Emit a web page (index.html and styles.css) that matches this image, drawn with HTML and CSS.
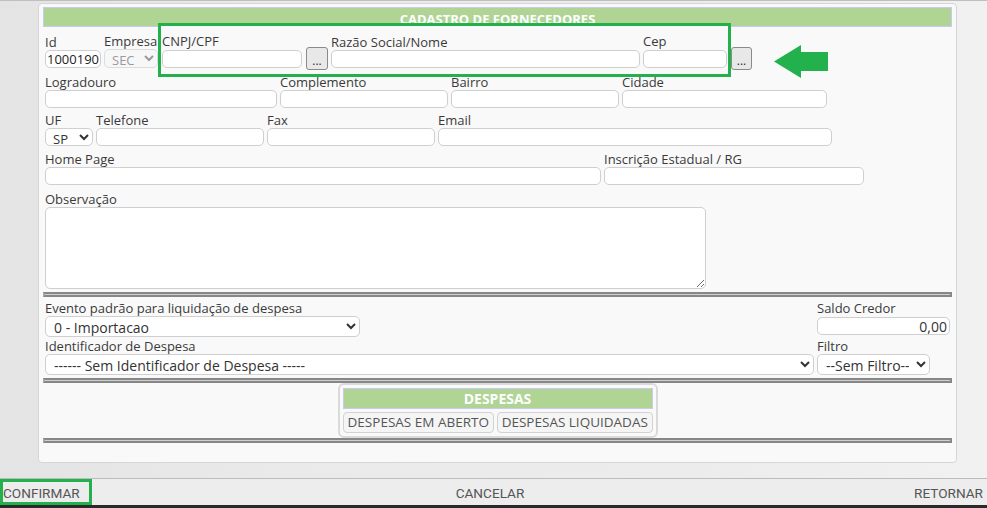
FILE: index.html
```html
<!DOCTYPE html>
<html lang="pt-BR">
<head>
<meta charset="utf-8">
<title>Cadastro de Fornecedores</title>
<link rel="stylesheet" href="styles.css">
</head>
<body>
<div class="page">
  <div class="panel">
    <div class="title">CADASTRO DE FORNECEDORES</div>
    <div class="form">
      <div class="row r1">
        <div class="field w-id"><label>Id</label><input class="inp num" value="1000190"></div>
        <div class="field w-emp"><label>Empresa</label><select class="sel dis h19" disabled><option>SEC</option></select></div>
        <div class="field w-cnpj ml1"><label class="up">CNPJ/CPF</label><input class="inp"></div>
        <button class="dots ml1">...</button>
        <div class="field w-razao"><label>Razão Social/Nome</label><input class="inp"></div>
        <div class="field w-cep"><label class="up">Cep</label><input class="inp"></div>
        <button class="dots ml1 w-dots2">...</button>
      </div>
      <div class="row r2">
        <div class="field w-log"><label>Logradouro</label><input class="inp"></div>
        <div class="field w-168"><label>Complemento</label><input class="inp"></div>
        <div class="field w-168"><label>Bairro</label><input class="inp"></div>
        <div class="field w-cid"><label>Cidade</label><input class="inp"></div>
      </div>
      <div class="row r3">
        <div class="field w-uf"><label>UF</label><select class="sel"><option>SP</option></select></div>
        <div class="field w-168"><label>Telefone</label><input class="inp"></div>
        <div class="field w-168"><label>Fax</label><input class="inp"></div>
        <div class="field w-email"><label>Email</label><input class="inp"></div>
      </div>
      <div class="row r4">
        <div class="field w-home"><label>Home Page</label><input class="inp"></div>
        <div class="field w-ie"><label>Inscrição Estadual / RG</label><input class="inp"></div>
      </div>
      <div class="row r5">
        <div class="field w-obs"><label>Observação</label><textarea class="obs"></textarea></div>
      </div>
      <div class="sep s1"></div>
      <div class="grid2">
        <div class="field"><label>Evento padrão para liquidação de despesa</label><select class="sel big w-evento"><option>0 - Importacao</option></select></div>
        <div class="field"><label>Saldo Credor</label><input class="inp saldo" value="0,00"></div>
        <div class="field"><label>Identificador de Despesa</label><select class="sel big"><option>------ Sem Identificador de Despesa -----</option></select></div>
        <div class="field"><label>Filtro</label><select class="sel big w-filtro"><option>--Sem Filtro--</option></select></div>
      </div>
      <div class="sep s2"></div>
      <div class="desp-wrap">
        <div class="desp">
          <div class="desp-title">DESPESAS</div>
          <div class="desp-btns">
            <button class="dbtn b1">DESPESAS EM ABERTO</button>
            <button class="dbtn b2">DESPESAS LIQUIDADAS</button>
          </div>
        </div>
      </div>
      <div class="sep s3"></div>
    </div>
  </div>
  <div class="footer">
    <span class="f-left">CONFIRMAR</span>
    <span class="f-mid">CANCELAR</span>
    <span class="f-right">RETORNAR</span>
  </div>
  <div class="bottombar"></div>

  <div class="mark-box"></div>
  <svg class="mark-arrow" width="55" height="33" viewBox="0 0 55 33"><polygon points="0,16.5 27,0 27,7 54,7 54,26 27,26 27,33" fill="#22b14c"/></svg>
  <div class="mark-confirm"></div>
</div>
</body>
</html>
```

FILE: styles.css
```css
html, body {
  margin: 0;
  padding: 0;
}
body {
  width: 987px;
  height: 508px;
  overflow: hidden;
  font-family: "Open Sans", "Noto Sans", sans-serif;
  background: linear-gradient(90deg, #e4e4e4 0, #eaeaea 30%, #ececec 70%, #f1f1f1 100%);
}
.page {
  position: relative;
  height: 508px;
  box-sizing: border-box;
  border-top: 1px solid #bfbfbf;
  display: flex;
  flex-direction: column;
}
.panel {
  margin: 2px 0 0 38px;
  width: 919px;
  height: 460px;
  box-sizing: border-box;
  background: #f9f9f9;
  border: 1px solid #d6d6d6;
  border-radius: 4px;
  padding: 3px 4px;
}
.title {
  height: 20px;
  box-sizing: border-box;
  background: #afd494;
  border: 1px solid #c9c9f3;
  color: #fff;
  font-weight: 700;
  font-size: 13px;
  line-height: 22px;
  text-align: center;
  overflow: hidden;
}
.form {
  position: relative;
  z-index: 2;
  padding-top: 6px;
}
.row {
  display: flex;
  align-items: flex-end;
  gap: 3px;
  padding-left: 2px;
  margin-bottom: 5px;
}
.r1 { margin-bottom: 6px; }
.r2 { margin-bottom: 4px; }
.r3 { margin-bottom: 5px; }
.r4 { margin-bottom: 6px; }
.r5 { margin-bottom: 0; }
.field label {
  display: block;
  font-size: 13px;
  line-height: 16px;
  color: #3a3a3a;
  white-space: nowrap;
}
.field label.up { position: relative; top: -1px; }
.inp, .sel, .obs {
  display: block;
  width: 100%;
  height: 18px;
  box-sizing: border-box;
  border: 1px solid #cfcfcf;
  border-radius: 5px;
  background: #fff;
  font-family: "Open Sans", "Noto Sans", sans-serif;
  font-size: 13px;
  color: #333;
  padding: 0 2px;
  margin: 0;
  outline: none;
}
.num { padding: 0 1px; color: #222; }
.sel { padding: 0 3px; color: #333; }
.h19 { height: 19px; }
.sel.dis { background: #f7f7f7; color: #9a9a9a; border-color: #dcdcdc; opacity: 1; }
.ml1 { margin-left: 1px; }
.w-id { width: 56px; }
.w-emp { width: 54px; }
.w-cnpj { width: 140px; }
.w-razao { width: 309px; }
.w-cep { width: 84px; }
.w-log { width: 232px; }
.w-168 { width: 168px; }
.w-cid { width: 205px; }
.w-uf { width: 48px; }
.w-email { width: 394px; }
.w-home { width: 556px; }
.w-ie { width: 260px; }
.w-obs { width: 661px; }
.dots {
  width: 22px;
  height: 23px;
  margin-bottom: -2px;
  box-sizing: border-box;
  border: 1px solid #8a8a8a;
  border-radius: 3px;
  background: #e8e8e8;
  font-family: "Open Sans", sans-serif;
  font-size: 12px;
  color: #333;
  padding: 4px 0 0;
  line-height: 14px;
}
.w-dots2 { width: 21px; }
.obs {
  height: 82px;
  resize: both;
}
.sep {
  height: 5px;
  box-sizing: border-box;
  border: 2px solid #878787;
  border-left-color: #a9a9a9;
  background: #cfcfcf;
}
.s1 { margin-top: 3px; }
.s2 { margin-top: 3px; }
.grid2 {
  display: grid;
  grid-template-columns: 769px 133px;
  column-gap: 3px;
  row-gap: 1px;
  padding-left: 2px;
  margin-top: 3px;
}
.sel.big { height: 21px; padding: 0 4px; font-size: 14px; }
.w-evento { width: 315px; }
.w-filtro { width: 113px; }
.saldo { text-align: right; margin-top: 1px; color: #333; font-size: 14px; }
.desp-wrap {
  display: flex;
  justify-content: center;
}
.desp {
  width: 320px;
  box-sizing: border-box;
  border: 2px solid #dadada;
  border-radius: 6px;
  padding: 3px;
  background: #f9f9f9;
}
.desp-title {
  height: 21px;
  box-sizing: border-box;
  background: #afd494;
  border: 1px solid #c9c9f3;
  color: #fff;
  font-weight: 700;
  font-size: 14px;
  line-height: 19px;
  text-align: center;
}
.desp-btns {
  display: flex;
  gap: 3px;
  margin-top: 3px;
}
.dbtn {
  height: 21px;
  box-sizing: border-box;
  border: 1px solid #d2d2d2;
  border-radius: 4px;
  background: #f5f5f5;
  color: #555;
  font-family: "Open Sans", sans-serif;
  font-size: 13.5px;
  padding: 0;
  line-height: 19px;
  white-space: nowrap;
}
.b1 { width: 152px; }
.b2 { width: 156px; }
.footer {
  margin-top: 15px;
  height: 27px;
  box-sizing: border-box;
  border-top: 1px solid #bcbcbc;
  background: #ededed;
  display: grid;
  grid-template-columns: 1fr auto 1fr;
  align-items: center;
  padding: 2px 4px 0 3px;
  font-family: Roboto, "Liberation Sans", sans-serif;
  font-size: 13.6px;
  color: #555;
}
.f-left { justify-self: start; }
.f-mid { justify-self: center; margin-right: 6px; }
.f-right { justify-self: end; }
.bottombar {
  height: 3px;
  background: #2a2a2a;
}
.mark-box {
  position: absolute;
  left: 158px;
  top: 22px;
  width: 573px;
  height: 54px;
  box-sizing: border-box;
  border: 3px solid #22b14c;
  background: #f9f9f9;
  z-index: 1;
}
.mark-arrow {
  position: absolute;
  left: 774px;
  top: 44px;
}
.mark-confirm {
  position: absolute;
  left: 0;
  top: 478px;
  width: 92px;
  height: 26px;
  box-sizing: border-box;
  border: 3px solid #22b14c;
  z-index: 5;
}
```
